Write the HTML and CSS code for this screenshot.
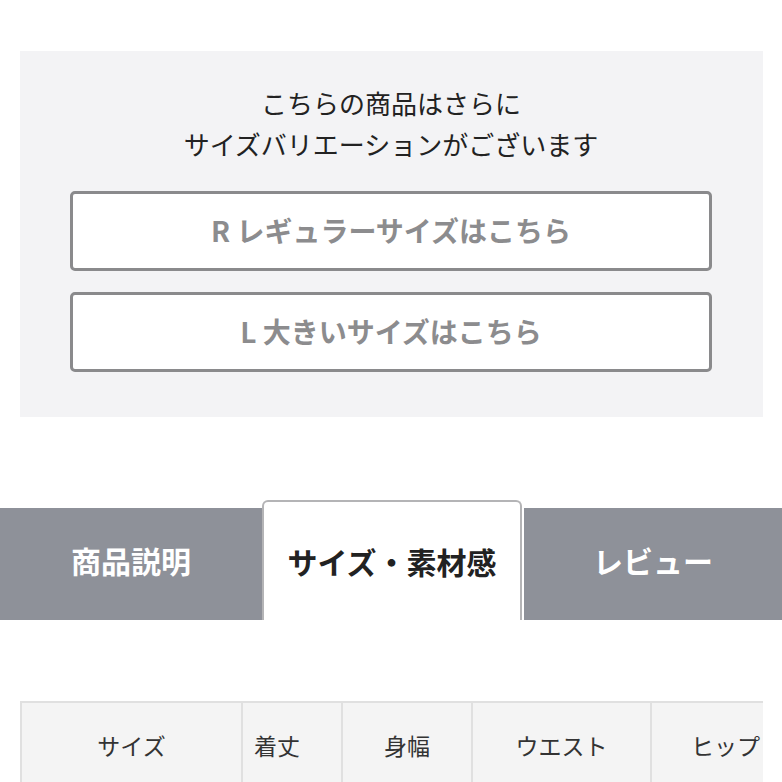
FILE: index.html
```html
<!DOCTYPE html>
<html lang="ja">
<head>
    <meta charset="UTF-8">
    <meta name="viewport" content="width=device-width, initial-scale=1.0">
    <title>サイズ・素材感</title>
    <link rel="stylesheet" href="styles.css">
</head>
<body>
    <div class="variation">
        <p class="variation-text">こちらの商品はさらに<br>サイズバリエーションがございます</p>
        <a class="variation-btn" href="#">R レギュラーサイズはこちら</a>
        <a class="variation-btn" href="#">L 大きいサイズはこちら</a>
    </div>

    <div class="tabs">
        <div class="tab tab-first">商品説明</div>
        <div class="tab active">サイズ・素材感</div>
        <div class="tab tab-last">レビュー</div>
    </div>

    <div class="size-table-wrap">
        <table class="size-table">
            <tr>
                <th class="col-size">サイズ</th>
                <th class="col-length">着丈</th>
                <th class="col-width">身幅</th>
                <th class="col-waist">ウエスト</th>
                <th class="col-hip">ヒップ</th>
            </tr>
        </table>
    </div>
</body>
</html>
```

FILE: styles.css
```css
body {
    margin: 0;
    background: #fff;
    font-family: "Noto Sans CJK JP", "Noto Sans", sans-serif;
    color: #222;
}
.variation {
    background: #f3f3f5;
    margin: 51px 19px 0 20px;
    padding: 31px 51px 45px 50px;
}
.variation-text {
    margin: 0 0 27px;
    text-align: center;
    font-size: 26px;
    line-height: 41px;
    font-weight: 400;
}
.variation-btn {
    display: flex;
    align-items: center;
    justify-content: center;
    height: 72px;
    padding-bottom: 2px;
    border: 3px solid #8a8a8c;
    border-radius: 5px;
    background: #fff;
    color: #8c8c8e;
    font-size: 28px;
    font-weight: 700;
    text-decoration: none;
}
.variation-btn + .variation-btn {
    margin-top: 21px;
}
.tabs {
    display: flex;
    align-items: flex-end;
    margin-top: 83px;
    height: 120px;
}
.tab {
    height: 112px;
    padding-bottom: 8px;
    display: flex;
    align-items: center;
    justify-content: center;
    background: #8e9199;
    color: #fff;
    font-size: 30px;
    font-weight: 700;
    box-sizing: border-box;
}
.tab-first {
    width: 262px;
}
.tab.active {
    width: 260px;
    height: 120px;
    padding-bottom: 0;
    background: #fff;
    color: #222;
    border: 2px solid #b4b4b6;
    border-bottom: none;
    border-radius: 6px 6px 0 0;
}
.tab-last {
    flex: 1;
    margin-left: 2px;
}
.size-table-wrap {
    margin: 81px 0 0 20px;
    width: 743px;
    overflow: hidden;
}
.size-table {
    border-collapse: collapse;
    table-layout: fixed;
    width: 900px;
}
.size-table th {
    height: 90px;
    padding: 25px 0 0;
    background: #f4f4f4;
    border: 2px solid #e0e0e0;
    font-size: 23px;
    font-weight: 400;
    color: #333;
    text-align: center;
    vertical-align: top;
    box-sizing: border-box;
}
.size-table .col-size { width: 221px; }
.size-table .col-length { width: 100px; text-align: left; padding-left: 11px; }
.size-table .col-width { width: 130px; }
.size-table .col-waist { width: 179px; }
.size-table .col-hip { width: 270px; text-align: left; padding-left: 39px; }
```
